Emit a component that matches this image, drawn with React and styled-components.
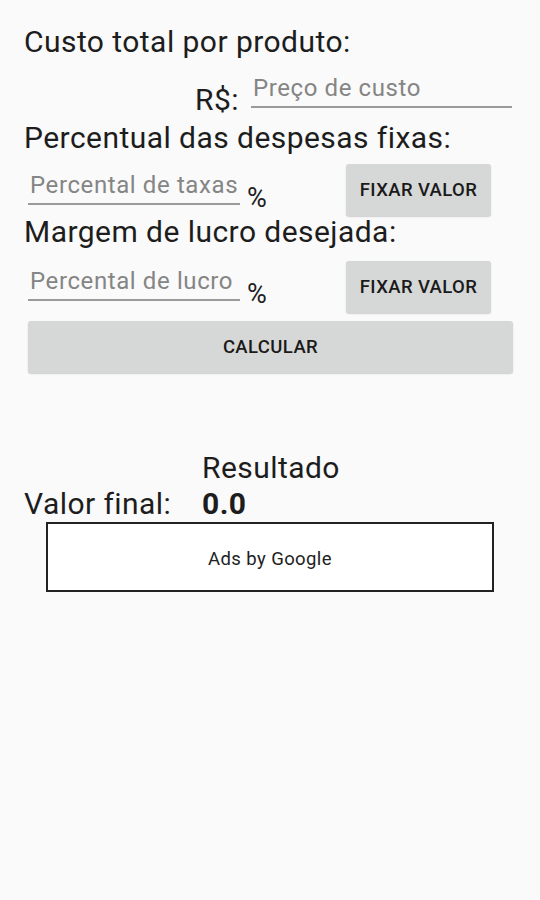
import React from "react";
import styled, { createGlobalStyle } from "styled-components";

const GlobalStyle = createGlobalStyle`
  html, body {
    margin: 0;
    padding: 0;
    background: #fafafa;
  }
  body {
    font-family: Roboto, "Noto Sans", "Liberation Sans", sans-serif;
    color: #1d1d1d;
  }
  * { box-sizing: border-box; }
`;

const Page = styled.div`
  min-height: 900px;
  padding: 24px 23px 0 24px;
  display: flex;
  flex-direction: column;
`;

const Label = styled.div`
  font-size: 30px;
  line-height: 36px;
  letter-spacing: 0.45px;
  color: #1d1d1d;
  margin-top: ${(p) => p.$mt || 0}px;
  margin-left: ${(p) => p.$ml || 0}px;
  white-space: nowrap;
`;

const CurrencyRow = styled.div`
  display: flex;
  align-items: flex-start;
  padding-left: 171px;
  gap: 12px;
`;

const TextField = styled.input`
  appearance: none;
  display: block;
  height: 35px;
  width: ${(p) => p.$w}px;
  margin: ${(p) => p.$m};
  padding: 0 0 3px 2px;
  border: none;
  border-bottom: 2px solid #9a9a9a;
  border-radius: 0;
  background: transparent;
  font-family: Roboto, "Noto Sans", "Liberation Sans", sans-serif;
  font-size: 24px;
  letter-spacing: 0.6px;
  color: #1d1d1d;
  outline: none;
  &::placeholder {
    color: #858585;
    letter-spacing: 0.6px;
    opacity: 1;
  }
`;

const InputRow = styled.div`
  display: flex;
  align-items: flex-start;
`;

const Percent = styled.span`
  font-size: 27px;
  line-height: 30px;
  margin: ${(p) => p.$mt}px 0 0 7px;
  color: #1d1d1d;
`;

const Button = styled.button`
  appearance: none;
  border: none;
  background: #d6d7d7;
  border-radius: 3px;
  box-shadow: 0 1px 1.5px rgba(0, 0, 0, 0.18);
  font-family: Roboto, "Noto Sans", "Liberation Sans", sans-serif;
  font-weight: 500;
  font-size: 18.5px;
  letter-spacing: 0.4px;
  color: #1a1a1a;
  height: 52px;
  display: flex;
  align-items: center;
  justify-content: center;
  padding: 0;
  cursor: pointer;
`;

const FixButton = styled(Button)`
  width: 145px;
  margin: ${(p) => p.$mt}px 26px 0 auto;
`;

const WideButton = styled(Button)`
  margin: 8px 4px 0 4px;
`;

const ResultTitle = styled(Label)`
  margin-top: 77px;
  margin-left: 178px;
`;

const ValueRow = styled.div`
  display: grid;
  grid-template-columns: 178px auto;
`;

const Value = styled(Label)`
  font-weight: 700;
`;

const AdBox = styled.div`
  width: 448px;
  height: 70px;
  margin-left: 22px;
  border: 2px solid #222;
  background: #ffffff;
  display: flex;
  align-items: center;
  justify-content: center;
  padding-top: 3px;
  font-size: 18.5px;
  letter-spacing: 0.4px;
  color: #222;
`;

export default function App() {
  return (
    <>
      <GlobalStyle />
      <Page>
        <Label>Custo total por produto:</Label>
        <CurrencyRow>
          <Label $mt={22}>R$:</Label>
          <TextField $w={261} $m="13px 0 0 0" placeholder="Preço de custo" />
        </CurrencyRow>
        <Label $mt={2}>Percentual das despesas fixas:</Label>
        <InputRow>
          <TextField $w={212} $m="14px 0 0 4px" placeholder="Percental de taxas" />
          <Percent $mt={27}>%</Percent>
          <FixButton $mt={8}>FIXAR VALOR</FixButton>
        </InputRow>
        <Label $mt={-2}>Margem de lucro desejada:</Label>
        <InputRow>
          <TextField $w={212} $m="16px 0 0 4px" placeholder="Percental de lucro" />
          <Percent $mt={29}>%</Percent>
          <FixButton $mt={11}>FIXAR VALOR</FixButton>
        </InputRow>
        <WideButton>CALCULAR</WideButton>
        <ResultTitle>Resultado</ResultTitle>
        <ValueRow>
          <Label>Valor final:</Label>
          <Value>0.0</Value>
        </ValueRow>
        <AdBox>Ads by Google</AdBox>
      </Page>
    </>
  );
}
